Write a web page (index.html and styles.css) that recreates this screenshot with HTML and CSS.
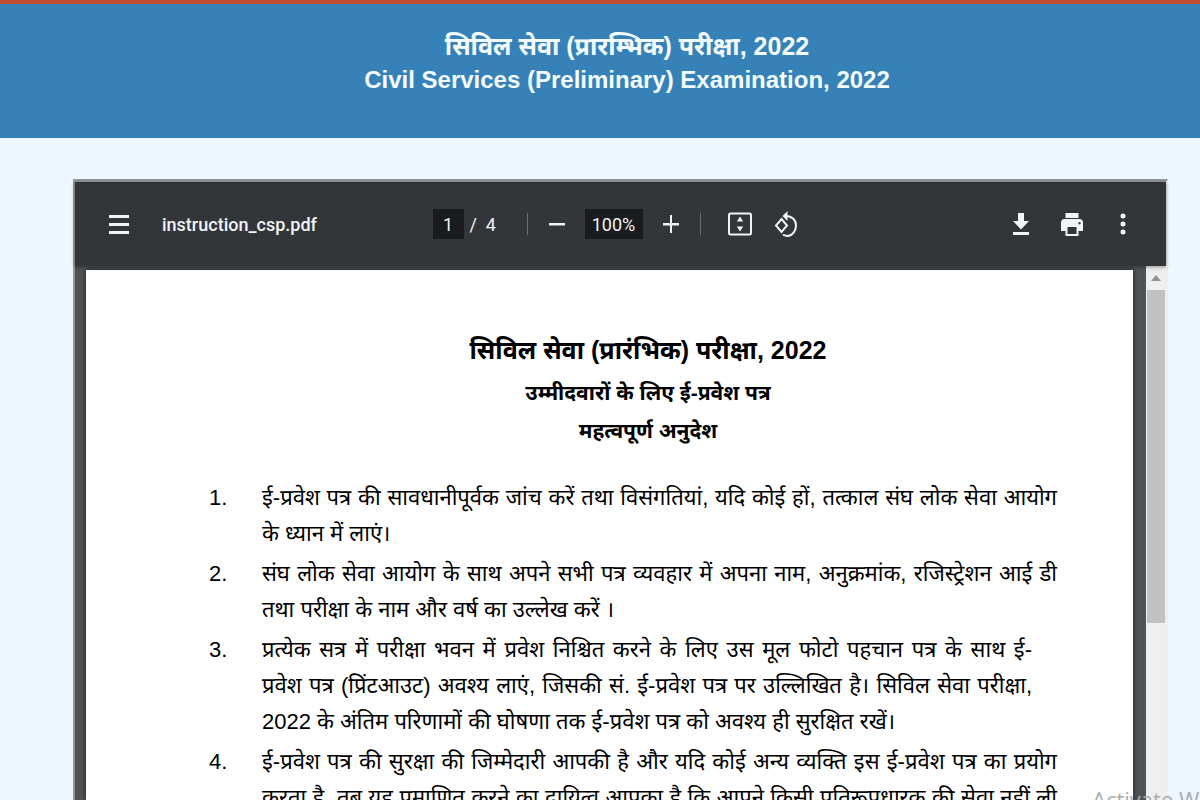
FILE: index.html
```html
<!DOCTYPE html>
<html lang="hi">
<head>
<meta charset="utf-8">
<title>Civil Services (Preliminary) Examination, 2022</title>
<link rel="stylesheet" href="styles.css">
</head>
<body>
<header class="banner">
  <h1 class="banner-title">सिविल सेवा (प्रारम्भिक) परीक्षा, 2022<span class="banner-english" lang="en">Civil Services (Preliminary) Examination, 2022</span></h1>
</header>
<main class="content">
  <section class="viewer" aria-label="PDF viewer">
    <div class="toolbar">
      <div class="group group-start">
        <button class="tool" type="button" aria-label="Menu"><svg class="icon-menu" viewBox="0 0 20 19"><path d="M0 0h20v3H0zM0 8h20v3H0zM0 16h20v3H0z"/></svg></button>
        <span class="file-name">instruction_csp.pdf</span>
      </div>
      <div class="group group-middle">
        <input class="field page-number" type="text" value="1" aria-label="Page number">
        <span class="page-total">/&nbsp; 4</span>
        <span class="divider divider-first"></span>
        <button class="tool" type="button" aria-label="Zoom out"><svg class="icon-zoom" viewBox="0 0 16 18"><path d="M0 8h16v2.500H0z"/></svg></button>
        <input class="field zoom-level" type="text" value="100%" aria-label="Zoom level">
        <button class="tool" type="button" aria-label="Zoom in"><svg class="icon-zoom" viewBox="0 0 16 18"><path d="M0 8h7V0h2v8h7v2.500H9V18H7v-7.500H0z"/></svg></button>
        <span class="divider divider-second"></span>
        <button class="tool tool-fit" type="button" aria-label="Fit to page"><svg class="icon-fit" viewBox="0 0 24 24"><rect class="outline" x="1" y="1.500" width="22" height="21" rx="1.500"/><path d="M12 4.500l3.200 5H8.800zM12 19.500l3.200-5H8.800z"/></svg></button>
        <button class="tool" type="button" aria-label="Rotate"><svg class="icon-rotate" viewBox="0 0 24 27"><path class="outline" d="M7.500 8l5.500 6.500L7.500 21 2 14.500zM12 5c6 0 10 4.300 10 9.500S18.500 25 13.500 25c-1.700 0-3-.5-4.500-1.300"/><path d="M13.500 0v10L8.500 5z"/></svg></button>
      </div>
      <div class="group group-end">
        <button class="tool" type="button" aria-label="Download"><svg class="icon-download" viewBox="0 0 16 22"><path d="M5 0h6v8h5l-8 8.500L0 8h5zM0 19h16v3H0z"/></svg></button>
        <button class="tool" type="button" aria-label="Print"><svg class="icon-print" viewBox="0 0 22 23"><path fill-rule="evenodd" d="M4.500 0h13v5h-13zM3.500 6h15Q22 6 22 10v8h-4.500v5h-13v-5H0v-8Q0 6 3.500 6zM6.500 14v7h9v-7zM18.500 9a1.200 1.200 0 1 0 .01 0z"/></svg></button>
        <button class="tool" type="button" aria-label="More actions"><svg class="icon-more" viewBox="0 0 6 22"><circle cx="3" cy="3" r="2.500"/><circle cx="3" cy="11" r="2.500"/><circle cx="3" cy="19" r="2.500"/></svg></button>
      </div>
    </div>
    <div class="stage">
      <article class="page">
        <div class="heading">
          <h2 class="page-title">सिविल सेवा (प्रारंभिक) परीक्षा, 2022</h2>
          <p class="page-subtitle">उम्मीदवारों के लिए ई-प्रवेश पत्र</p>
          <p class="page-subtitle">महत्वपूर्ण अनुदेश</p>
        </div>
        <ol class="rules">
          <li class="rule"><span class="number">1.</span><p class="lines"><span class="line full">ई-प्रवेश पत्र की सावधानीपूर्वक जांच करें तथा विसंगतियां, यदि कोई हों, तत्काल संघ लोक सेवा आयोग</span> <span class="line">के ध्यान में लाएं।</span></p></li>
          <li class="rule"><span class="number">2.</span><p class="lines"><span class="line full">संघ लोक सेवा आयोग के साथ अपने सभी पत्र व्यवहार में अपना नाम, अनुक्रमांक, रजिस्ट्रेशन आई डी</span> <span class="line">तथा परीक्षा के नाम और वर्ष का उल्लेख करें ।</span></p></li>
          <li class="rule"><span class="number">3.</span><p class="lines narrow"><span class="line full">प्रत्येक सत्र में परीक्षा भवन में प्रवेश निश्चित करने के लिए उस मूल फोटो पहचान पत्र के साथ ई-</span> <span class="line full">प्रवेश पत्र (प्रिंटआउट) अवश्य लाएं, जिसकी सं. ई-प्रवेश पत्र पर उल्लिखित है। सिविल सेवा परीक्षा,</span> <span class="line">2022 के अंतिम परिणामों की घोषणा तक ई-प्रवेश पत्र को अवश्य ही सुरक्षित रखें।</span></p></li>
          <li class="rule"><span class="number">4.</span><p class="lines"><span class="line full">ई-प्रवेश पत्र की सुरक्षा की जिम्मेदारी आपकी है और यदि कोई अन्य व्यक्ति इस ई-प्रवेश पत्र का प्रयोग</span> <span class="line full">करता है, तब यह प्रमाणित करने का दायित्व आपका है कि आपने किसी प्रतिरूपधारक की सेवा नहीं ली</span></p></li>
        </ol>
      </article>
      <div class="scrollbar" aria-hidden="true">
        <svg class="arrow" viewBox="0 0 10 6"><path d="M5 0l5 6H0z"/></svg>
        <div class="thumb"></div>
      </div>
    </div>
  </section>
</main>
<div class="watermark" lang="en">Activate Windows</div>
</body>
</html>
```
FILE: styles.css
```css
* { box-sizing: border-box; }

body {
  display: flex;
  flex-direction: column;
  height: 100vh;
  margin: 0;
  overflow: hidden;
  background: #eef7ff;
  color: #000;
  font-family: "Liberation Sans", "Noto Sans Devanagari", "Noto Sans", sans-serif;
}

.banner {
  flex: none;
  height: 138px;
  padding: 24px 0 0 54px;
  border-top: 4px solid #bf4d35;
  background: #3682b8;
  color: #f3fbff;
  text-align: center;
}

.banner-title {
  margin: 0;
  font-size: 25px;
  line-height: 36px;
}

.banner-english {
  display: block;
  font-size: 24px;
  line-height: 32px;
}

.content {
  display: flex;
  flex: 1;
  min-height: 0;
  padding: 41px 32px 0 73px;
}

.viewer {
  display: flex;
  flex: 1;
  flex-direction: column;
  min-width: 0;
  border: solid #94989b;
  border-width: 3px 0 0 2px;
  border-right: 2px solid #eee;
}

.toolbar {
  position: relative;
  display: grid;
  flex: none;
  grid-template-columns: 1fr auto 1fr;
  align-items: center;
  height: 84px;
  padding: 0 31px 0 32px;
  background: #323639;
  box-shadow: 0 1px 4px #0006;
  color: #f1f3f6;
  font-family: Roboto, sans-serif;
}

.group { display: flex; align-items: center; }
.group-start { gap: 31px; }
.group-middle { padding-right: 12px; }
.group-end { justify-content: flex-end; gap: 27px; }

.tool {
  display: flex;
  align-items: center;
  justify-content: center;
  width: 24px;
  height: 32px;
  padding: 0;
  border: 0;
  background: none;
  color: inherit;
}

.tool svg { flex: none; fill: currentColor; }
.tool .outline { fill: none; stroke: currentColor; stroke-width: 2; }
.tool-fit { margin: 0 22px 0 27px; }
.icon-menu { width: 20px; height: 19px; }
.icon-zoom { width: 16px; height: 18px; }
.icon-fit { width: 24px; height: 24px; }
.icon-rotate { width: 24px; height: 27px; }
.icon-download { width: 16px; height: 22px; }
.icon-print { width: 22px; height: 23px; }
.icon-more { width: 6px; height: 22px; }

.file-name { font-size: 18px; font-weight: 500; }

.field {
  height: 30px;
  padding: 0;
  border: 0;
  background: #191b1d;
  color: inherit;
  font: 18px Roboto, sans-serif;
  text-align: center;
}

.page-number { width: 31px; }
.zoom-level { width: 58px; margin: 0 16px; }
.page-total { width: 38px; padding-left: 6px; font-size: 18px; white-space: nowrap; }
.divider { width: 1px; height: 22px; background: #6b6f72; }
.divider-first { margin: 0 17px 0 25px; }
.divider-second { margin-left: 17px; }

.stage {
  display: flex;
  flex: 1;
  min-height: 0;
  overflow: hidden;
  background: #505355;
}

.page {
  flex: 1;
  min-width: 0;
  margin: 4px 13px 0 11px;
  padding: 60px 46px 0 123px;
  background: #fff;
  box-shadow: 0 0 5px #000a;
}

.heading { font-weight: 700; text-align: center; }
.page-title { margin: 0 0 4px; font-size: 25px; line-height: 40px; }
.page-subtitle { margin: 0; font-size: 21px; line-height: 38px; }

.rules { margin: 30px 30px 0 0; padding: 0; list-style: none; }
.rule { display: flex; margin-bottom: 4px; font-size: 22px; line-height: 36px; }
.number { flex: none; width: 53px; }
.lines { flex: 1; min-width: 0; margin: 0; }
.narrow { padding-right: 25px; }
.line { display: block; white-space: nowrap; }
.full { text-align: justify; text-align-last: justify; }

.scrollbar {
  display: flex;
  flex: none;
  flex-direction: column;
  align-items: center;
  width: 20px;
  background: #efefef;
}

.arrow { flex: none; width: 10px; height: 6px; margin: 9px 0; fill: #929292; }
.thumb { flex: none; width: 18px; height: 333px; background: #c1c1c1; }

.watermark {
  position: absolute;
  top: 786px;
  left: 1092px;
  width: calc(100% - 1092px);
  height: 14px;
  overflow: hidden;
  color: #a9adb0;
  font: 22px/26px "Open Sans", sans-serif;
  white-space: nowrap;
}
```
